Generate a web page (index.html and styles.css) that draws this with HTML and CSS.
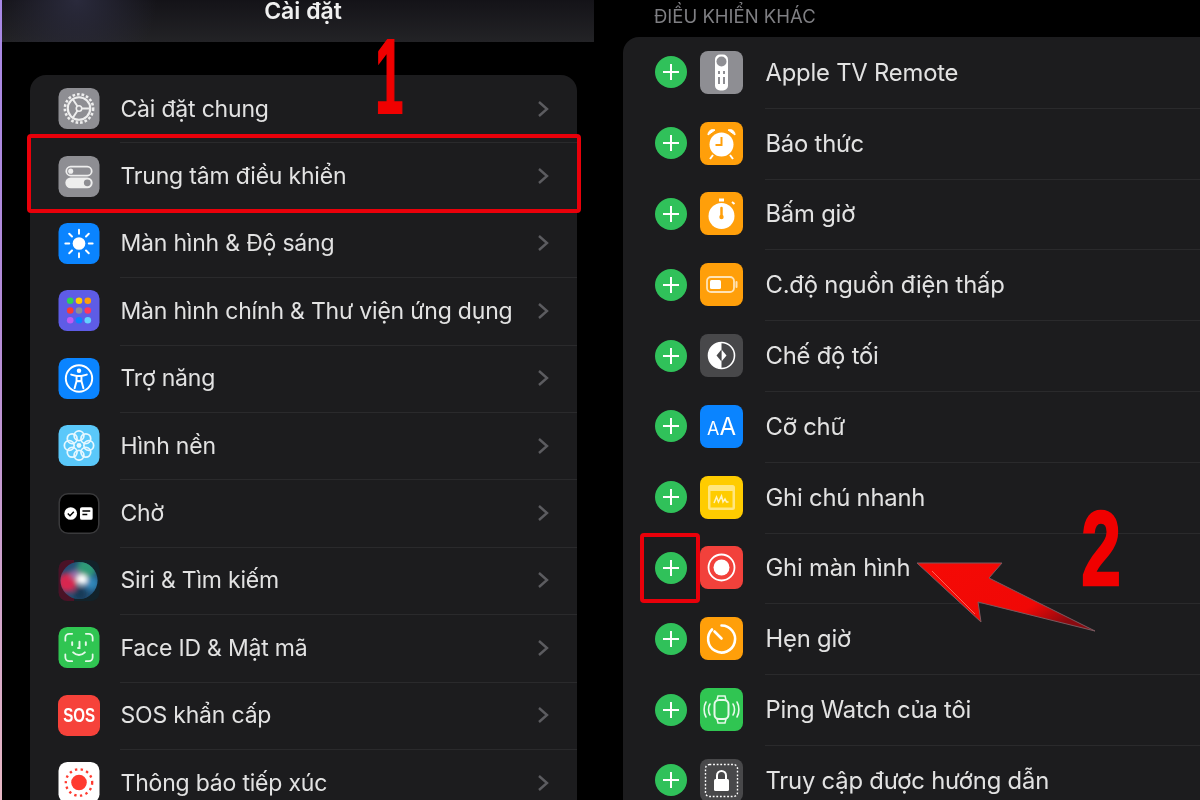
FILE: index.html
```html
<!DOCTYPE html>
<html lang="vi">
<head>
  <meta charset="UTF-8">
  <title>Cài đặt</title>
  <link rel="stylesheet" href="styles.css">
</head>
<body>
  <div class="man">
    <section class="cot-trai">
      <header class="dau">Cài đặt</header>
      <div class="the the-trai">
        <div class="hang">
          <svg class="ico" viewBox="0 0 42 42"><rect width="42" height="42" rx="9" fill="#8e8e93"/><circle cx="21" cy="21" r="14.500" fill="none" stroke="#eee" stroke-width="2.600" stroke-dasharray="2.700 2"/><circle cx="21" cy="21" r="11.500" fill="none" stroke="#eee" stroke-width="2.200"/><path d="M21 21l-6-9M21 21l11 0M21 21l-6 9" stroke="#eee" stroke-width="2"/><circle cx="21" cy="21" r="2.800" fill="#8e8e93" stroke="#eee" stroke-width="1.600"/></svg>
          <span class="ten">Cài đặt chung</span>
          <svg class="mui" viewBox="0 0 12 18"><path d="M2 2l8 7-8 7"/></svg>
        </div>
        <div class="hang">
          <svg class="ico" viewBox="0 0 42 42"><rect width="42" height="42" rx="9" fill="#8e8e93"/><rect x="8" y="11" width="26" height="9" rx="4.500" fill="none" stroke="#eee" stroke-width="1.800"/><circle cx="12.500" cy="15.500" r="2.600" fill="#eee"/><rect x="7" y="22" width="28" height="11" rx="5.500" fill="#eee"/><circle cx="29.500" cy="27.500" r="3.500" fill="#8e8e93"/></svg>
          <span class="ten">Trung tâm điều khiển</span>
          <svg class="mui" viewBox="0 0 12 18"><path d="M2 2l8 7-8 7"/></svg>
        </div>
        <div class="hang">
          <svg class="ico" viewBox="0 0 42 42"><rect width="42" height="42" rx="9" fill="#0a84ff"/><circle cx="21" cy="21" r="6.500" fill="#fff"/><path d="M21 7v4M21 31v4M7 21h4M31 21h4M11 11l2.800 2.800M28.200 28.200l2.800 2.800M31 11l-2.800 2.800M13.800 28.200L11 31" stroke="#fff" stroke-width="2" stroke-linecap="round"/></svg>
          <span class="ten">Màn hình &amp; Độ sáng</span>
          <svg class="mui" viewBox="0 0 12 18"><path d="M2 2l8 7-8 7"/></svg>
        </div>
        <div class="hang">
          <svg class="ico" viewBox="0 0 42 42"><rect width="42" height="42" rx="9" fill="#5e5ce6"/><circle cx="12" cy="11" r="3.400" fill="#30d158"/><circle cx="21" cy="11" r="3.400" fill="#ffcc00"/><circle cx="30" cy="11" r="3.400" fill="#ff9f0a"/><circle cx="12" cy="21" r="3.400" fill="#ff3b30"/><circle cx="21" cy="21" r="3.400" fill="#8e8e93"/><circle cx="30" cy="21" r="3.400" fill="#ff375f"/><circle cx="12" cy="31" r="3.400" fill="#bf5af2"/><circle cx="21" cy="31" r="3.400" fill="#0a84ff"/><circle cx="30" cy="31" r="3.400" fill="#64d2ff"/></svg>
          <span class="ten">Màn hình chính &amp; Thư viện ứng dụng</span>
          <svg class="mui" viewBox="0 0 12 18"><path d="M2 2l8 7-8 7"/></svg>
        </div>
        <div class="hang">
          <svg class="ico" viewBox="0 0 42 42"><rect width="42" height="42" rx="9" fill="#0a84ff"/><circle cx="21" cy="21" r="13.500" fill="none" stroke="#fff" stroke-width="2"/><circle cx="21" cy="13" r="2.300" fill="#fff"/><path d="M13 17l5.500 1.500v5L16.500 31M29 17l-5.500 1.500v5L25.500 31M18.500 18.500h5M18.500 24l2.500-.5 2.500.5" fill="none" stroke="#fff" stroke-width="2" stroke-linecap="round" stroke-linejoin="round"/></svg>
          <span class="ten">Trợ năng</span>
          <svg class="mui" viewBox="0 0 12 18"><path d="M2 2l8 7-8 7"/></svg>
        </div>
        <div class="hang">
          <svg class="ico" viewBox="0 0 42 42"><rect width="42" height="42" rx="9" fill="#5ac8fa"/><g fill="none" stroke="#e8f8ff" stroke-width="1.800"><circle cx="21" cy="11" r="5"/><circle cx="28" cy="14" r="5"/><circle cx="31" cy="21" r="5"/><circle cx="28" cy="28" r="5"/><circle cx="21" cy="31" r="5"/><circle cx="14" cy="28" r="5"/><circle cx="11" cy="21" r="5"/><circle cx="14" cy="14" r="5"/></g><circle cx="21" cy="21" r="2.500" fill="#e8f8ff"/></svg>
          <span class="ten">Hình nền</span>
          <svg class="mui" viewBox="0 0 12 18"><path d="M2 2l8 7-8 7"/></svg>
        </div>
        <div class="hang">
          <svg class="ico" viewBox="0 0 42 42"><rect x=".75" y=".75" width="40.500" height="40.500" rx="9" fill="#000" stroke="#3a3a3c" stroke-width="1.500"/><circle cx="12.500" cy="21" r="6.500" fill="#fff"/><path d="M9.500 21l2.300 2.300 3.900-4" fill="none" stroke="#000" stroke-width="1.500"/><rect x="22" y="14.500" width="13" height="13" rx="2" fill="#fff"/><path d="M24.500 18.500h8M24.500 22h5" stroke="#000" stroke-width="1.500"/></svg>
          <span class="ten">Chờ</span>
          <svg class="mui" viewBox="0 0 12 18"><path d="M2 2l8 7-8 7"/></svg>
        </div>
        <div class="hang">
          <svg class="ico" viewBox="0 0 42 42">
            <defs>
              <filter id="mo"><feGaussianBlur stdDeviation="2.500"/></filter>
              <clipPath id="tron"><circle cx="21" cy="21" r="19"/></clipPath>
            </defs>
            <rect width="42" height="42" rx="9" fill="#12222a"/>
            <path d="M0 9a9 9 0 0 1 9-9h7v42H9a9 9 0 0 1-9-9z" fill="#4a1226"/>
            <g clip-path="url(#tron)">
              <rect width="42" height="42" fill="#234f75"/>
              <g filter="url(#mo)">
                <circle cx="9" cy="23" r="10" fill="#d8264f"/>
                <circle cx="29" cy="8" r="10" fill="#2f9a78"/>
                <circle cx="34" cy="24" r="7" fill="#2f86b8"/>
                <circle cx="22" cy="35" r="7" fill="#173a58"/>
                <circle cx="17" cy="15" r="5" fill="#9a6ea8"/>
                <circle cx="24" cy="20" r="5.500" fill="#fff"/>
              </g>
            </g>
          </svg>
          <span class="ten">Siri &amp; Tìm kiếm</span>
          <svg class="mui" viewBox="0 0 12 18"><path d="M2 2l8 7-8 7"/></svg>
        </div>
        <div class="hang">
          <svg class="ico" viewBox="0 0 42 42"><rect width="42" height="42" rx="9" fill="#30c552"/><path d="M7 14v-3a4 4 0 0 1 4-4h3M28 7h3a4 4 0 0 1 4 4v3M35 28v3a4 4 0 0 1-4 4h-3M14 35h-3a4 4 0 0 1-4-4v-3" fill="none" stroke="#e4f8e8" stroke-width="1.800" stroke-linecap="round"/><path d="M14 15.500v3M28 15.500v3M21.500 15v6.500h-1.500M15 26c3.500 3.500 8.500 3.500 12 0" fill="none" stroke="#e4f8e8" stroke-width="2" stroke-linecap="round"/></svg>
          <span class="ten">Face ID &amp; Mật mã</span>
          <svg class="mui" viewBox="0 0 12 18"><path d="M2 2l8 7-8 7"/></svg>
        </div>
        <div class="hang">
          <div class="ico ico-sos"><span>SOS</span></div>
          <span class="ten">SOS khẩn cấp</span>
          <svg class="mui" viewBox="0 0 12 18"><path d="M2 2l8 7-8 7"/></svg>
        </div>
        <div class="hang">
          <svg class="ico" viewBox="0 0 42 42"><rect width="42" height="42" rx="9" fill="#fff"/><circle cx="21" cy="21" r="8" fill="#ff3b30"/><circle cx="21" cy="21" r="13.500" fill="none" stroke="#ff3b30" stroke-width="2.400" stroke-dasharray="2.400 3.500"/></svg>
          <span class="ten">Thông báo tiếp xúc</span>
          <svg class="mui" viewBox="0 0 12 18"><path d="M2 2l8 7-8 7"/></svg>
        </div>
      </div>
    </section>

    <section class="cot-phai">
      <div class="nhan">ĐIỀU KHIỂN KHÁC</div>
      <div class="the the-phai">
        <div class="dong">
          <span class="cong"></span>
          <svg class="ico-lon" viewBox="0 0 43 43"><rect width="43" height="43" rx="8" fill="#8e8e93"/><rect x="15" y="3.500" width="13" height="36" rx="5" fill="#fff"/><circle cx="21.500" cy="10.500" r="5" fill="#8e8e93"/><path d="M19 20v3M24 20v3M19 26v7M24 26v7" stroke="#8e8e93" stroke-width="2"/></svg>
          <span class="ten">Apple TV Remote</span>
        </div>
        <div class="dong">
          <span class="cong"></span>
          <svg class="ico-lon" viewBox="0 0 43 43"><rect width="43" height="43" rx="8" fill="#ff9f0a"/><circle cx="21.500" cy="22.500" r="12" fill="#fff"/><path d="M21.500 15v8h-6" fill="none" stroke="#ff9f0a" stroke-width="2"/><path d="M8 13a5 5 0 0 1 7-5zM35 13a5 5 0 0 0-7-5z" fill="#fff" stroke="#fff"/><path d="M13 33l-3 4M30 33l3 4" stroke="#fff" stroke-width="2"/></svg>
          <span class="ten">Báo thức</span>
        </div>
        <div class="dong">
          <span class="cong"></span>
          <svg class="ico-lon" viewBox="0 0 43 43"><rect width="43" height="43" rx="8" fill="#ff9f0a"/><circle cx="21.500" cy="24" r="13" fill="#fff"/><rect x="19" y="6.500" width="5" height="3" fill="#fff"/><path d="M32 10l2.500 2" stroke="#fff" stroke-width="2"/><path d="M21.500 16v9" stroke="#ff9f0a" stroke-width="2.500" stroke-linecap="round"/><circle cx="21.500" cy="25" r="2.200" fill="#ff9f0a"/></svg>
          <span class="ten">Bấm giờ</span>
        </div>
        <div class="dong">
          <span class="cong"></span>
          <svg class="ico-lon" viewBox="0 0 43 43"><rect width="43" height="43" rx="8" fill="#ff9f0a"/><rect x="7" y="14" width="27" height="15" rx="4" fill="none" stroke="#ffe3b5" stroke-width="1.800"/><rect x="10" y="17" width="11" height="9" rx="1.500" fill="#fff"/><path d="M36.500 19v5" stroke="#ffe3b5" stroke-width="2" stroke-linecap="round"/></svg>
          <span class="ten">C.độ nguồn điện thấp</span>
        </div>
        <div class="dong">
          <span class="cong"></span>
          <svg class="ico-lon" viewBox="0 0 43 43"><rect width="43" height="43" rx="8" fill="#48484a"/><circle cx="21.500" cy="21.500" r="13" fill="none" stroke="#fff" stroke-width="1.600"/><path d="M21.500 8.500a13 13 0 0 0 0 26z" fill="#fff"/><path d="M21.500 15.500l5 6-5 6z" fill="#fff"/><path d="M21.500 15.500l-5 6 5 6z" fill="#48484a"/></svg>
          <span class="ten">Chế độ tối</span>
        </div>
        <div class="dong">
          <span class="cong"></span>
          <div class="ico-lon ico-aa"><span class="aa-nho">A</span>A</div>
          <span class="ten">Cỡ chữ</span>
        </div>
        <div class="dong">
          <span class="cong"></span>
          <svg class="ico-lon" viewBox="0 0 43 43"><rect width="43" height="43" rx="8" fill="#ffcc00"/><rect x="8" y="9" width="27" height="25" rx="2.500" fill="#ffe680"/><rect x="10.500" y="15" width="22" height="16.500" fill="#ffcc00"/><path d="M14 27l2.500-6 2 5 3-6 1.500 6 2-3 1.500 3h2" fill="none" stroke="#fff3c0" stroke-width="1.500"/></svg>
          <span class="ten">Ghi chú nhanh</span>
        </div>
        <div class="dong">
          <span class="cong"></span>
          <svg class="ico-lon" viewBox="0 0 43 43"><rect width="43" height="43" rx="8" fill="#f2413b"/><circle cx="21.500" cy="21.500" r="13" fill="none" stroke="#fff" stroke-width="1.800"/><circle cx="21.500" cy="21.500" r="8" fill="#fff"/></svg>
          <span class="ten">Ghi màn hình</span>
        </div>
        <div class="dong">
          <span class="cong"></span>
          <svg class="ico-lon" viewBox="0 0 43 43"><rect width="43" height="43" rx="8" fill="#ff9f0a"/><path d="M21.500 8.500a13.500 13.500 0 1 1-9.500 4" fill="none" stroke="#fff" stroke-width="2.600" stroke-linecap="round"/><path d="M14.500 14.500l7 7" stroke="#fff" stroke-width="2.600" stroke-linecap="round"/></svg>
          <span class="ten">Hẹn giờ</span>
        </div>
        <div class="dong">
          <span class="cong"></span>
          <svg class="ico-lon" viewBox="0 0 43 43"><rect width="43" height="43" rx="8" fill="#30c552"/><rect x="14.500" y="12" width="14" height="19" rx="4.500" fill="none" stroke="#e6f9ea" stroke-width="2"/><path d="M17 12l1-4h7l1 4M17 31l1 4h7l1-4" fill="none" stroke="#e6f9ea" stroke-width="1.500"/><path d="M10 16c-2 3-2 8 0 11M33 16c2 3 2 8 0 11M6 14c-2.500 4-2.500 11 0 15M37 14c2.500 4 2.500 11 0 15" fill="none" stroke="#e6f9ea" stroke-width="1.600" stroke-linecap="round"/></svg>
          <span class="ten">Ping Watch của tôi</span>
        </div>
        <div class="dong">
          <span class="cong"></span>
          <svg class="ico-lon" viewBox="0 0 43 43"><rect width="43" height="43" rx="8" fill="#48484a"/><rect x="5.500" y="5.500" width="32" height="32" rx="4" fill="none" stroke="#fff" stroke-width="1.400" stroke-dasharray="1.800 1.800"/><rect x="14" y="20" width="15" height="12" rx="1.500" fill="#fff"/><path d="M17 20v-3.500a4.500 4.500 0 0 1 9 0V20" fill="none" stroke="#fff" stroke-width="2"/></svg>
          <span class="ten">Truy cập được hướng dẫn</span>
        </div>
      </div>
    </section>

    <!-- chu thich do ve de len anh -->
    <div class="so so-1">1</div>
    <div class="so so-2">2</div>
    <div class="khung khung-1"></div>
    <div class="khung khung-2"></div>
    <svg class="mui-ten" viewBox="0 0 200 100">
      <defs>
        <linearGradient id="duoi" x1="0" y1="0" x2="1" y2=".6">
          <stop offset="0" stop-color="#f60a05"/>
          <stop offset=".75" stop-color="#f00806"/>
          <stop offset="1" stop-color="#8a0a10"/>
        </linearGradient>
      </defs>
      <path d="M7 13H92L79 28L185 81L68 52L71 72Z" fill="url(#duoi)" stroke="#7a5a60" stroke-width="1"/>
      <path d="M22 21L65 64" stroke="#ff8a7a" stroke-width="1" opacity=".7"/>
    </svg>
  </div>
</body>
</html>
```

FILE: styles.css
```css
* {
  box-sizing: border-box;
}

html, body {
  margin: 0;
  height: 100%;
  background: #000;
}

.man {
  position: relative;
  display: flex;
  width: 1200px;
  height: 800px;
  overflow: hidden;
  background: #000;
  color: #e2e2e2;
  font-family: Inter, "Noto Sans", sans-serif;
  filter: blur(.4px);
}

.cot-trai {
  width: 594px;
  flex: none;
  border-left: 2px solid #b79be0;
  border-image: linear-gradient(#a888e6, #b48cd8 40%, #e8b8c4) 1;
}

.dau {
  height: 42px;
  padding-left: 10px;
  background: radial-gradient(circle at 75px 0, #2a2a3c, transparent 80px), linear-gradient(#141318, #232326);
  color: #f0f0f0;
  font-size: 23px;
  font-weight: 600;
  line-height: 23px;
  text-align: center;
}

.the {
  background: #1c1c1e;
}

.the-trai {
  width: 547px;
  height: 760px;
  margin: 33px 0 0 28px;
  padding-left: 28px;
  border-radius: 16px 16px 0 0;
}

.hang {
  display: flex;
  align-items: center;
  height: 67.4px;
  position: relative;
}

.hang + .hang::before, .dong + .dong::before {
  content: "";
  position: absolute;
  top: 0;
  right: 0;
  left: 62px;
  height: 1px;
  background: #2a2a2c;
}

.ico {
  width: 42px;
  height: 41px;
  flex: none;
}

.ico-sos {
  display: flex;
  align-items: center;
  justify-content: center;
  border-radius: 9px;
  background: #f6423a;
  color: #fff;
  font-family: "Liberation Sans", sans-serif;
  font-size: 21px;
  font-weight: 700;
}

.ico-sos span {
  transform: scaleX(.72);
}

.ten {
  margin-left: 20.5px;
  font-size: 23px;
  letter-spacing: -.2px;
  white-space: nowrap;
}

.mui {
  width: 12px;
  height: 18px;
  margin-left: auto;
  margin-right: 28px;
  flex: none;
}

.mui path {
  fill: none;
  stroke: #5c5c60;
  stroke-width: 2.400;
}

.cot-phai {
  flex: 1;
  padding-left: 29px;
}

.nhan {
  height: 37px;
  padding: 6px 0 0 31px;
  color: #7f7f83;
  font-size: 18.500px;
  line-height: 20px;
}

.the-phai {
  height: 763px;
  padding-left: 32px;
  border-radius: 16px 0 0 0;
}

.dong {
  position: relative;
  display: flex;
  align-items: center;
  height: 70.8px;
}

.dong + .dong::before {
  left: 110px;
}

.cong {
  position: relative;
  width: 32px;
  height: 32px;
  flex: none;
  border-radius: 50%;
  background: #30c15a;
}

.cong::before, .cong::after {
  content: "";
  position: absolute;
  top: 15px;
  left: 8px;
  width: 16px;
  height: 2px;
  background: #fff;
}

.cong::after {
  transform: rotate(90deg);
}

.ico-lon {
  width: 43px;
  height: 43px;
  flex: none;
  margin-left: 13px;
}

.ico-aa {
  display: flex;
  align-items: baseline;
  justify-content: center;
  border-radius: 8px;
  background: #0a84ff;
  color: #fff;
  font-size: 24px;
  line-height: 43px;
}

.aa-nho {
  font-size: 18px;
}

.dong .ten {
  margin-left: 22.5px;
  font-size: 23.800px;
}

/* phan ve de */
.so {
  position: absolute;
  color: #f00000;
  font-family: "Liberation Sans", sans-serif;
  font-weight: 700;
  line-height: 1;
}

.so-1 {
  top: 24px;
  left: 360px;
  font-size: 105px;
  transform: scaleX(.48);
  -webkit-text-stroke: 2px #f00000;
}

.so-2 {
  top: 496px;
  left: 1072px;
  font-size: 105px;
  transform: scaleX(.68);
  -webkit-text-stroke: 2.500px #f00000;
}

.khung {
  position: absolute;
  border: 4px solid #e9000a;
  border-radius: 4px;
}

.khung-1 {
  top: 134px;
  left: 27px;
  width: 554px;
  height: 79px;
}

.khung-2 {
  top: 533px;
  left: 640px;
  width: 60px;
  height: 70px;
}

.mui-ten {
  position: absolute;
  top: 550px;
  left: 910px;
  width: 200px;
  height: 100px;
}
```
